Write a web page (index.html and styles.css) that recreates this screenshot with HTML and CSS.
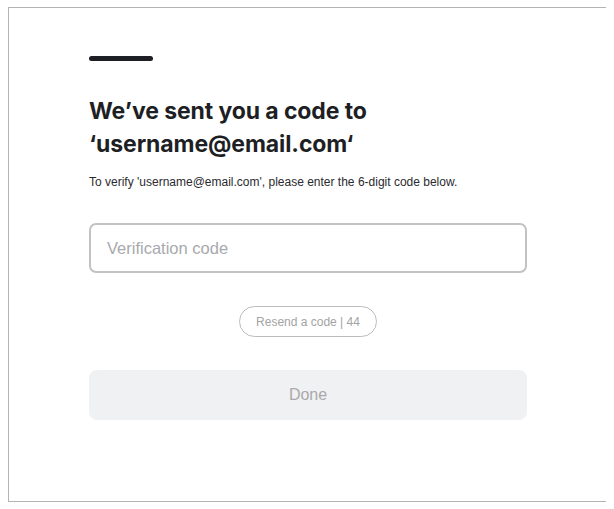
FILE: index.html
```html
<!DOCTYPE html>
<html>
<head>
<meta charset="utf-8">
<link rel="stylesheet" href="styles.css">
</head>
<body>
<div class="frame">
  <div class="content">
    <div class="bar"></div>
    <h1 class="title">We’ve sent you a code to ‘username@email.com‘</h1>
    <p class="subtitle">To verify 'username@email.com', please enter the 6-digit code below.</p>
    <input class="code-input" type="text" placeholder="Verification code">
    <div class="resend-row">
      <button class="resend">Resend a code | 44</button>
    </div>
    <button class="done">Done</button>
  </div>
</div>
</body>
</html>
```
FILE: styles.css
```css
html, body {
  background: #ffffff;
}
body {
  margin: 7px 8px;
}
.frame {
  width: 600px;
  height: 495px;
  box-sizing: border-box;
  border: 1px solid #b3b3b3;
  padding: 48px 80px 0 80px;
}
.content {
  display: flex;
  flex-direction: column;
}
.bar {
  width: 64px;
  height: 5px;
  border-radius: 3px;
  background: #1e1f24;
}
.title {
  margin: 34px 0 0 0;
  font-family: Inter, "Liberation Sans", sans-serif;
  font-weight: 700;
  font-size: 23px;
  line-height: 33px;
  color: #1e1f24;
  letter-spacing: -0.1px;
}
.subtitle {
  margin: 13px 0 0 0;
  font-family: "Liberation Sans", Arial, sans-serif;
  font-size: 12px;
  line-height: 17px;
  color: #2a2a2e;
}
.code-input {
  margin-top: 32px;
  height: 50px;
  box-sizing: border-box;
  border: 2px solid #c2c2c4;
  border-radius: 7px;
  padding: 0 16px;
  font-family: "Liberation Sans", Arial, sans-serif;
  font-size: 16.5px;
  outline: none;
}
.code-input::placeholder {
  color: #a8a9ae;
}
.resend-row {
  display: flex;
  justify-content: center;
  margin-top: 33px;
}
.resend {
  height: 31px;
  padding: 0 16px;
  border: 1px solid #bcbcbc;
  border-radius: 16px;
  background: #ffffff;
  font-family: "Liberation Sans", Arial, sans-serif;
  font-size: 12px;
  color: #a3a3a3;
}
.done {
  margin-top: 33px;
  height: 50px;
  border: none;
  border-radius: 8px;
  background: #f0f1f3;
  font-family: "Liberation Sans", Arial, sans-serif;
  font-size: 16px;
  color: #a9a9ab;
}
```
